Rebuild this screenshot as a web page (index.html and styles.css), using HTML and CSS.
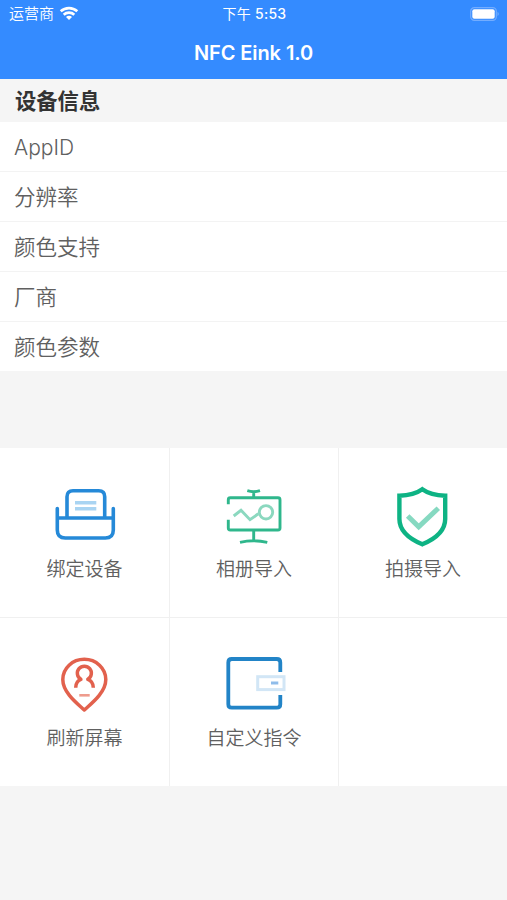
FILE: index.html
```html
<!DOCTYPE html>
<html lang="zh-CN">
<head>
<meta charset="utf-8">
<title>NFC Eink 1.0</title>
<link rel="stylesheet" href="styles.css">
</head>
<body>
<header class="header">
  <div class="status">
    <div class="carrier"><span>运营商</span>
      <svg class="wifi" width="20" height="15" viewBox="0 0 20 15" fill="none" stroke="#fff" stroke-width="2.7"><path d="M1.700 5.300a12.400 12.400 0 0 1 16.600 0M4.700 8.700a7.800 7.800 0 0 1 10.600 0"/><path d="M10 14l-3-3a4.200 4.200 0 0 1 6 0z" fill="#fff" stroke="none"/></svg>
    </div>
    <div class="time"><span class="period">下午</span> 5:53</div>
    <svg class="battery" width="30" height="14" viewBox="0 0 30 14"><rect x=".7" y=".7" width="25.6" height="12.6" rx="3.6" fill="none" stroke="#73adff" stroke-width="1.2"/><rect x="2.3" y="2.3" width="22.4" height="9.4" rx="2" fill="#fff"/><path d="M27.6 4.800q2 2.200 0 4.400z" fill="#86b9ff"/></svg>
  </div>
  <h1 class="title">NFC Eink 1.0</h1>
</header>
<main>
  <h2 class="section">设备信息</h2>
  <ul class="list">
    <li class="latin">AppID</li>
    <li>分辨率</li>
    <li>颜色支持</li>
    <li>厂商</li>
    <li>颜色参数</li>
  </ul>
  <div class="grid">
    <div class="cell">
      <svg class="icon blue" viewBox="0 0 64 64"><path d="M4.300 23.500V45q0 8 8 8h40q8 0 8-8V23.500M4.300 33h56M14 33V11.700q0-6 6-6h25.700q6 0 6 6V33"/><path class="pale-blue" d="M22 17.700h21.300M22 23.700h21.300"/></svg>
      <span>绑定设备</span>
    </div>
    <div class="cell">
      <svg class="icon green" viewBox="0 0 64 64"><path d="M6.300 19.300v-4.600q0-2 2-2H56q2 0 2 2V43q0 2-2 2H8.300q-2 0-2-2v-8.300M25.300 5.700q6.400 2 12.700 0M31.700 6.700v6M31.700 45v10.500M18 57.300q13.700-3 27.300 0"/><path class="pale-green" d="M11.700 31l7.300-5.700 9 9.400 8.300-5.900"/><circle class="pale-green" cx="44" cy="27.300" r="6.700"/></svg>
      <span>相册导入</span>
    </div>
    <div class="cell">
      <svg class="icon shield" viewBox="0 0 64 64"><path d="M31.300 4.200Q23 10.300 8.400 10.700V34c0 11.500 9 19.500 22.900 25.300C45.200 53.500 54.200 45.500 54.200 34V10.700Q39.600 10.300 31.300 4.200z"/><path class="check" d="M16.700 31l11 10.800 19.600-18.600"/></svg>
      <span>拍摄导入</span>
    </div>
    <div class="cell">
      <svg class="icon red" viewBox="0 0 64 64"><path d="M31.300 56C25.500 50.500 9.800 39 9.800 25.500a21.500 20.200 0 0 1 43 0C52.800 39 37.100 50.500 31.300 56z"/><path d="M22.700 33.700q0-6.400 5.200-8.400a7 7 0 1 1 6.900 0q5.500 2 5.500 8.400"/><path class="pale-red" d="M26.300 41.300h10.400"/></svg>
      <span>刷新屏幕</span>
    </div>
    <div class="cell">
      <svg class="icon navy" viewBox="0 0 64 64"><path d="M58.300 18V8.500q0-3.500-3.500-3.500h-45Q6.300 5 6.300 8.500v41.700q0 3.500 3.500 3.500h45q3.500 0 3.500-3.500V41"/><rect class="card" x="35.700" y="22.700" width="26.300" height="12.900"/><path class="slot" d="M49 29h7.300"/></svg>
      <span>自定义指令</span>
    </div>
    <div class="cell"></div>
  </div>
</main>
</body>
</html>
```
FILE: styles.css
```css
* { box-sizing: border-box; }
body {
  margin: 0;
  min-height: 900px;
  background: #f5f5f5;
  color: #606060;
  font-family: Inter, "Noto Sans CJK SC", sans-serif;
}
.header {
  height: 79px;
  background: #348bff;
  color: #fff;
}
.status {
  height: 27px;
  padding: 0 7px 0 9px;
  display: grid;
  grid-template-columns: 1fr auto 1fr;
  align-items: center;
  font-size: 14px;
  line-height: 27px;
}
.carrier { display: flex; align-items: center; gap: 5px; font-size: 15px; }
.carrier span { font-weight: 350; }
.wifi { margin-bottom: 1px; }
.time { font-weight: 500; letter-spacing: .25px; }
.period { font-weight: 400; }
.battery { justify-self: end; }
.title {
  margin: 0;
  font-size: 20px;
  line-height: 52px;
  font-weight: 600;
  letter-spacing: -.08px;
  text-align: center;
}
.section {
  margin: 0;
  height: 43px;
  padding-left: 15px;
  color: #333;
  font-size: 21.3px;
  line-height: 45px;
  font-weight: 700;
}
.list {
  margin: 0 0 77px;
  padding: 0;
  list-style: none;
  background: #fff;
}
.list li {
  height: 50px;
  padding-left: 14px;
  font-size: 21.500px;
  line-height: 51px;
  font-weight: 350;
  border-bottom: 1px solid #f3f3f3;
}
.list li:last-child { height: 49px; border-bottom: 0; }
.list .latin { font-size: 21px; font-weight: 300; }
.grid {
  display: grid;
  grid-template-columns: 170px 169px 168px;
  grid-template-rows: 170px 168px;
  background: #fff;
}
.cell {
  display: flex;
  flex-direction: column;
  align-items: center;
  padding-top: 37px;
  border-right: 1px solid #f0f0f0;
  border-bottom: 1px solid #f0f0f0;
  font-size: 19px;
  line-height: 28px;
  font-weight: 350;
}
.cell:nth-child(3n) { border-right: 0; }
.cell:nth-child(n+4) { border-bottom: 0; padding-top: 36px; }
.cell span { margin-top: 7px; }
.icon {
  width: 64px;
  height: 64px;
  fill: none;
  stroke-width: 3.300;
}
.blue { stroke: #2589d8; stroke-width: 3.600; stroke-linecap: round; }
.pale-blue { stroke: #a9d4f2; stroke-linecap: butt; }
.green { stroke: #2fb78c; stroke-width: 2.900; }
.pale-green { stroke: #8bd8bf; }
.shield { stroke: #0eb384; stroke-width: 4.400; }
.check { stroke: #86d9c1; stroke-width: 5; }
.red { stroke: #e2614d; stroke-width: 3.500; stroke-linejoin: round; }
.pale-red { stroke: #ee9b8d; stroke-width: 2.600; }
.navy { stroke: #2284c7; stroke-width: 3.800; }
.card { stroke: #d2e6f6; stroke-width: 3; }
.slot { stroke: #8fbcea; stroke-width: 3; }
```
